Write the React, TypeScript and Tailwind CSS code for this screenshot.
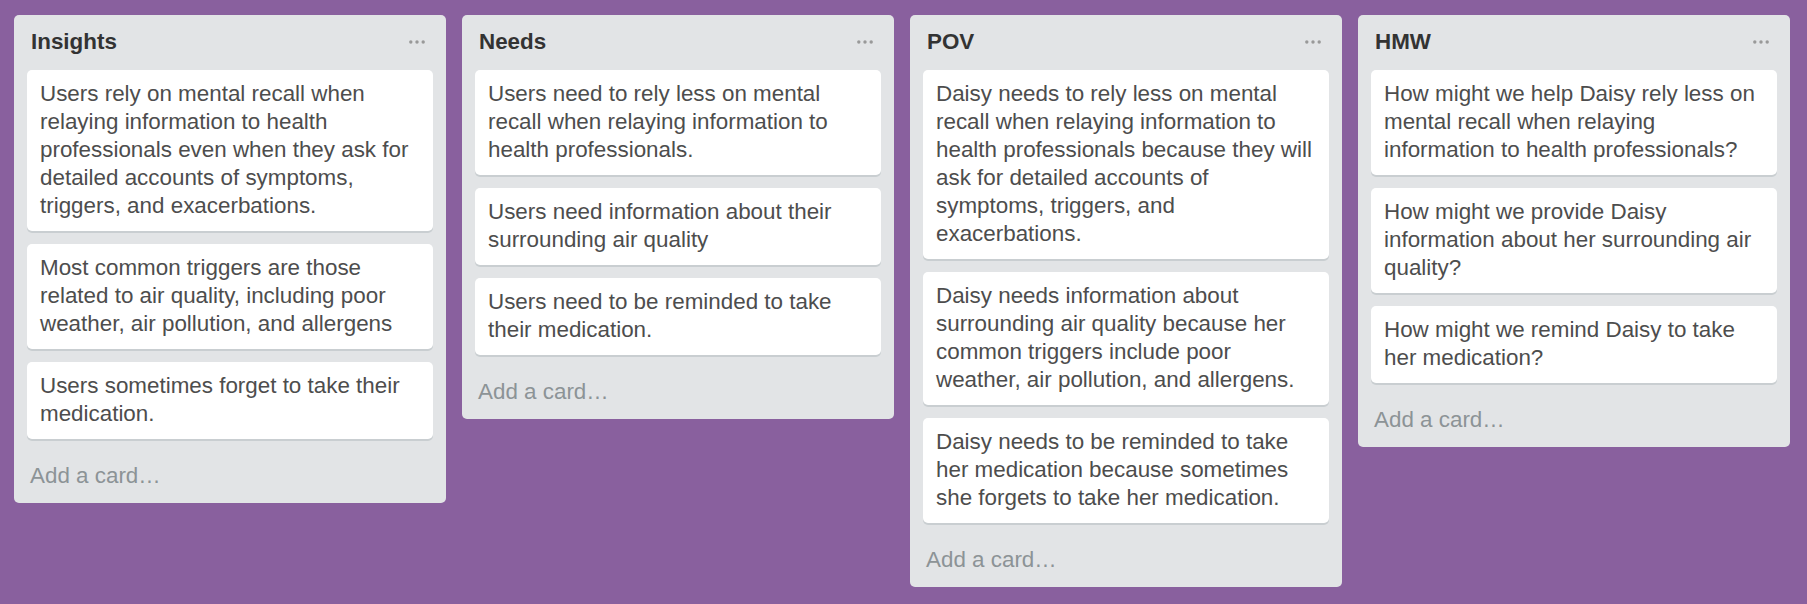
import React from "react";

type List = { title: string; cards: string[] };

const lists: List[] = [
  {
    title: "Insights",
    cards: [
      "Users rely on mental recall when relaying information to health professionals even when they ask for detailed accounts of symptoms, triggers, and exacerbations.",
      "Most common triggers are those related to air quality, including poor weather, air pollution, and allergens",
      "Users sometimes forget to take their medication.",
    ],
  },
  {
    title: "Needs",
    cards: [
      "Users need to rely less on mental recall when relaying information to health professionals.",
      "Users need information about their surrounding air quality",
      "Users need to be reminded to take their medication.",
    ],
  },
  {
    title: "POV",
    cards: [
      "Daisy needs to rely less on mental recall when relaying information to health professionals because they will ask for detailed accounts of symptoms, triggers, and exacerbations.",
      "Daisy needs information about surrounding air quality because her common triggers include poor weather, air pollution, and allergens.",
      "Daisy needs to be reminded to take her medication because sometimes she forgets to take her medication.",
    ],
  },
  {
    title: "HMW",
    cards: [
      "How might we help Daisy rely less on mental recall when relaying information to health professionals?",
      "How might we provide Daisy information about her surrounding air quality?",
      "How might we remind Daisy to take her medication?",
    ],
  },
];

function Dots() {
  return (
    <svg width="16" height="4" viewBox="0 0 16 4" className="block">
      <circle cx="1.8" cy="2" r="1.7" fill="#999" />
      <circle cx="8" cy="2" r="1.7" fill="#999" />
      <circle cx="14.2" cy="2" r="1.7" fill="#999" />
    </svg>
  );
}

function Column({ list }: { list: List }) {
  return (
    <div className="w-[432px] shrink-0 rounded-[5px] bg-[#e2e4e6] flex flex-col">
      <div className="h-[55px] pt-[13px] pl-[17px] pr-[21px]">
        <div className="flex items-center justify-between h-[28px]">
          <span className="text-[22.4px] leading-[28px] font-bold text-[#333]">{list.title}</span>
          <Dots />
        </div>
      </div>
      <div className="px-[13px] flex flex-col gap-[13px]">
        {list.cards.map((c, i) => (
          <div
            key={i}
            className="bg-white rounded-[5px] shadow-[0_2px_0_#c9ced1] pt-[10px] pb-[11px] px-[13px] text-[22.4px] leading-[28px] text-[#4d4d4d]"
          >
            {c}
          </div>
        ))}
      </div>
      <div className="pt-[23px] pb-[13px] pl-[16px] text-[22.4px] leading-[28px] text-[#8c9396]">
        Add a card…
      </div>
    </div>
  );
}

export default function App() {
  return (
    <div className="min-h-screen w-full bg-[#89609e] font-['Liberation_Sans',Arial,sans-serif]">
      <div className="flex items-start gap-[16px] pt-[15px] pl-[14px]">
        {lists.map((l) => (
          <Column key={l.title} list={l} />
        ))}
      </div>
    </div>
  );
}
